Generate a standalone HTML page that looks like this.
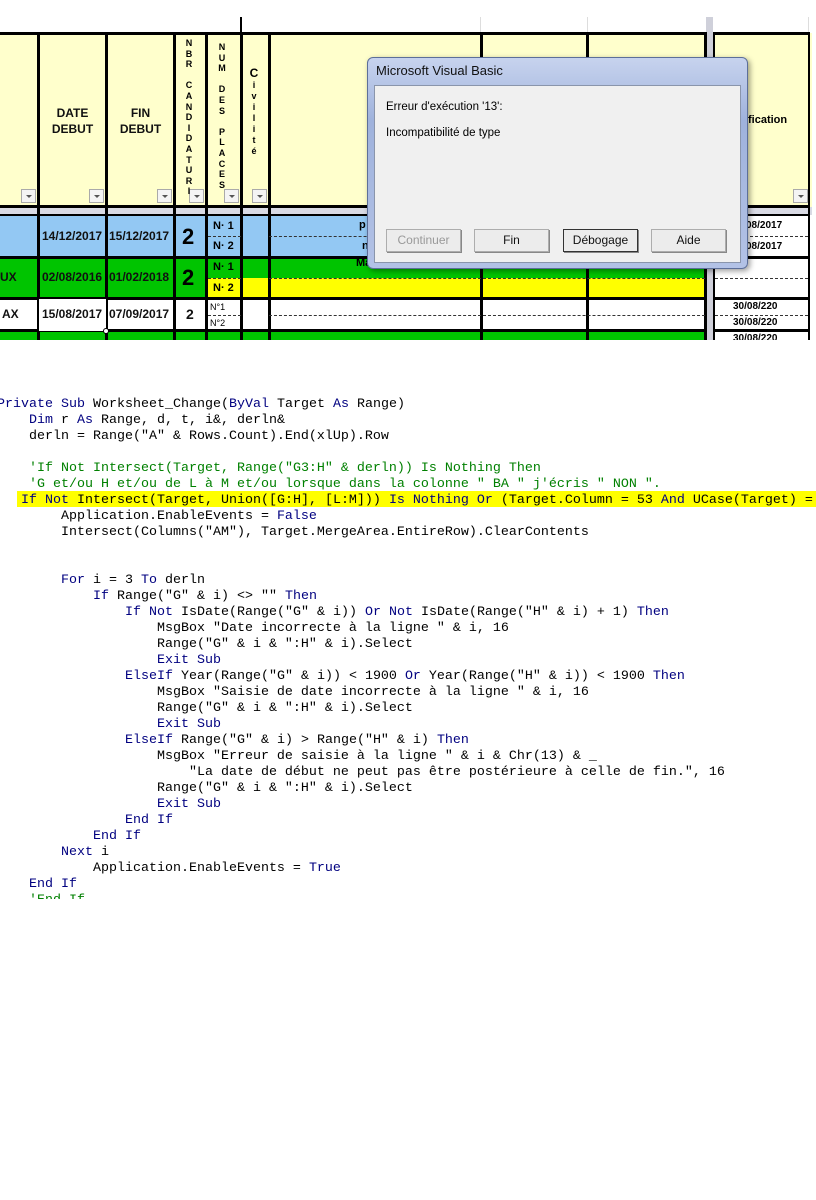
<!DOCTYPE html>
<html><head><meta charset="utf-8">
<style>
*{margin:0;padding:0;box-sizing:border-box}
html,body{width:816px;height:1200px;overflow:hidden}
body{background:#fff;position:relative;font-family:"Liberation Sans",Arial,sans-serif}
.a{position:absolute}
.vl{position:absolute;background:#000;width:3px}
.hl{position:absolute;background:#000;height:3px}
.dash{position:absolute;height:0;border-top:1px dashed #333}
.dd{position:absolute;width:15px;height:14px;background:#f4f4f4;border:1px solid #aaa;top:189px}
.dd:after{content:"";position:absolute;left:4px;top:5px;border-left:3px solid transparent;border-right:3px solid transparent;border-top:3px solid #555}
.b{font-weight:bold;font-size:12px;color:#111}
.vt{position:absolute;font-weight:bold;font-size:9px;line-height:10.6px;text-align:center;width:12px}
#clip{position:absolute;left:0;top:380px;width:816px;height:519px;overflow:hidden}
#code{position:absolute;left:-3px;top:17px;font-family:"Liberation Mono",monospace;font-size:13.33px;line-height:16px;white-space:pre;color:#000}
.k{color:#000080}.c{color:#008000}
.btn{position:absolute;top:229px;width:75px;height:23px;background:#ececec;border:1px solid #adadad;box-shadow:1px 1px 0 #888;font-size:12px;text-align:center;line-height:21px;color:#111}
</style></head><body>
<div class="a" style="left:0;top:33px;width:812px;height:174px;background:#ffffcc"></div>
<div class="a" style="left:0;top:207px;width:812px;height:8px;background:#d9dae4"></div>
<div class="a" style="left:0;top:215px;width:706px;height:42px;background:#93c8f3"></div>
<div class="a" style="left:706px;top:215px;width:106px;height:42px;background:#fff"></div>
<div class="a" style="left:0;top:257px;width:706px;height:41px;background:#00c400"></div>
<div class="a" style="left:208px;top:278px;width:498px;height:20px;background:#ffff00"></div>
<div class="a" style="left:0;top:331px;width:706px;height:9px;background:#00c400"></div>
<div class="a" style="left:706px;top:17px;width:7px;height:323px;background:#cfd0da"></div>
<div class="vl" style="left:240px;top:17px;height:16px;width:2px"></div>
<div class="a" style="left:480px;top:17px;width:1px;height:16px;background:#ddd"></div>
<div class="a" style="left:587px;top:17px;width:1px;height:16px;background:#ddd"></div>
<div class="a" style="left:808px;top:17px;width:1px;height:16px;background:#ddd"></div>
<div class="hl" style="left:0;top:32px;width:706px"></div>
<div class="hl" style="left:713px;top:32px;width:96px"></div>
<div class="hl" style="left:0;top:205px;width:706px"></div>
<div class="hl" style="left:713px;top:205px;width:96px"></div>
<div class="hl" style="left:0;top:214px;width:706px;height:2px"></div>
<div class="hl" style="left:713px;top:214px;width:96px;height:2px"></div>
<div class="hl" style="left:0;top:256px;width:706px"></div>
<div class="hl" style="left:713px;top:256px;width:96px"></div>
<div class="hl" style="left:0;top:297px;width:706px"></div>
<div class="hl" style="left:713px;top:297px;width:96px"></div>
<div class="hl" style="left:0;top:329px;width:706px"></div>
<div class="hl" style="left:713px;top:329px;width:96px"></div>
<div class="vl" style="left:37px;top:32px;height:308px"></div>
<div class="vl" style="left:105px;top:32px;height:308px"></div>
<div class="vl" style="left:173px;top:32px;height:308px"></div>
<div class="vl" style="left:205px;top:32px;height:308px"></div>
<div class="vl" style="left:240px;top:32px;height:308px"></div>
<div class="vl" style="left:268px;top:32px;height:308px"></div>
<div class="vl" style="left:480px;top:32px;height:308px"></div>
<div class="vl" style="left:586px;top:32px;height:308px"></div>
<div class="vl" style="left:704px;top:32px;height:308px"></div>
<div class="vl" style="left:713px;top:32px;height:308px;width:2px"></div>
<div class="vl" style="left:808px;top:32px;height:308px;width:2px"></div>
<div class="dash" style="left:208px;top:236px;width:33px"></div>
<div class="dash" style="left:269px;top:236px;width:436px"></div>
<div class="dash" style="left:715px;top:236px;width:93px"></div>
<div class="dash" style="left:208px;top:278px;width:33px"></div>
<div class="dash" style="left:269px;top:278px;width:436px"></div>
<div class="dash" style="left:715px;top:278px;width:93px"></div>
<div class="dash" style="left:208px;top:315px;width:33px"></div>
<div class="dash" style="left:269px;top:315px;width:436px"></div>
<div class="dash" style="left:715px;top:315px;width:93px"></div>
<div class="dd" style="left:21px"></div><div class="dd" style="left:89px"></div><div class="dd" style="left:157px"></div>
<div class="dd" style="left:189px"></div><div class="dd" style="left:224px"></div><div class="dd" style="left:252px"></div>
<div class="dd" style="left:793px"></div>
<div class="a b" style="left:40px;top:105px;width:65px;text-align:center;line-height:16px">DATE<br>DEBUT</div>
<div class="a b" style="left:108px;top:105px;width:65px;text-align:center;line-height:16px">FIN<br>DEBUT</div>
<div class="vt" style="left:183px;top:38px">N<br>B<br>R<br><br>C<br>A<br>N<br>D<br>I<br>D<br>A<br>T<br>U<br>R<br>I</div>
<div class="vt" style="left:216px;top:42px">N<br>U<br>M<br><br>D<br>E<br>S<br><br>P<br>L<br>A<br>C<br>E<br>S</div>
<div class="vt" style="left:248px;top:68px;font-size:9px;line-height:11px"><span style="font-size:12px">C</span><br>i<br>v<br>i<br>l<br>i<br>t<br>é</div>
<div class="a" style="left:748px;top:114px;font-weight:bold;font-size:11px">fication</div>
<div class="a b" style="left:42px;top:229px">14/12/2017</div>
<div class="a b" style="left:109px;top:229px">15/12/2017</div>
<div class="a" style="left:182px;top:224px;font-weight:bold;font-size:22px">2</div>
<div class="a" style="left:213px;top:220px;font-weight:bold;font-size:11px">N· 1</div>
<div class="a" style="left:213px;top:240px;font-weight:bold;font-size:11px">N· 2</div>
<div class="a b" style="left:0;top:270px">UX</div>
<div class="a b" style="left:42px;top:270px">02/08/2016</div>
<div class="a b" style="left:109px;top:270px">01/02/2018</div>
<div class="a" style="left:182px;top:265px;font-weight:bold;font-size:22px">2</div>
<div class="a" style="left:213px;top:261px;font-weight:bold;font-size:11px">N· 1</div>
<div class="a" style="left:213px;top:282px;font-weight:bold;font-size:11px">N· 2</div>
<div class="a" style="left:356px;top:257px;font-weight:bold;font-size:11px">Ma</div>
<div class="a" style="left:359px;top:219px;font-weight:bold;font-size:11px">p</div>
<div class="a" style="left:362px;top:240px;font-weight:bold;font-size:11px">n</div>
<div class="a b" style="left:2px;top:307px">AX</div>
<div class="a" style="left:38px;top:298px;width:69px;height:34px;border:1px solid #000;background:#fff"></div>
<div class="a" style="left:103px;top:328px;width:6px;height:6px;border:1px solid #000;background:#fff;border-radius:50%"></div>
<div class="a b" style="left:42px;top:307px">15/08/2017</div>
<div class="a b" style="left:109px;top:307px">07/09/2017</div>
<div class="a b" style="left:186px;top:306px;font-size:14px">2</div>
<div class="a" style="left:210px;top:302px;font-size:9px">N°1</div>
<div class="a" style="left:210px;top:318px;font-size:9px">N°2</div>
<div class="a" style="left:746px;top:220px;font-weight:bold;font-size:10px">08/2017</div>
<div class="a" style="left:746px;top:241px;font-weight:bold;font-size:10px">08/2017</div>
<div class="a" style="left:733px;top:301px;font-weight:bold;font-size:10px">30/08/220</div>
<div class="a" style="left:733px;top:317px;font-weight:bold;font-size:10px">30/08/220</div>
<div class="a" style="left:733px;top:333px;font-weight:bold;font-size:10px;height:7px;overflow:hidden">30/08/220</div>
<div class="a" style="left:0;top:340px;width:816px;height:20px;background:#fff"></div>
<div class="a" style="left:367px;top:57px;width:381px;height:212px;border-radius:6px;background:linear-gradient(#c7d3ee,#9fb2dc 30%,#b3c2e6);border:1px solid #5d6f99;box-shadow:2px 2px 6px rgba(0,0,0,.4)"></div>
<div class="a" style="left:376px;top:63px;font-size:13px;color:#111">Microsoft Visual Basic</div>
<div class="a" style="left:374px;top:85px;width:367px;height:178px;background:#f0f0f0;border:1px solid #8a95ab"></div>
<div class="a" style="left:386px;top:101px;font-size:11.5px">Erreur d'exécution '13':</div>
<div class="a" style="left:386px;top:127px;font-size:11.5px">Incompatibilité de type</div>
<div class="btn" style="left:386px;color:#999">Continuer</div>
<div class="btn" style="left:474px">Fin</div>
<div class="btn" style="left:563px;border:1px solid #333">Débogage</div>
<div class="btn" style="left:651px">Aide</div>
<div id="clip">
<div class="a" style="left:17px;top:111px;width:799px;height:16px;background:#ffff00"></div>
<div id="code"><span class="k">Private Sub</span> Worksheet_Change(<span class="k">ByVal</span> Target <span class="k">As</span> Range)
    <span class="k">Dim</span> r <span class="k">As</span> Range, d, t, i&amp;, derln&amp;
    derln = Range("A" &amp; Rows.Count).End(xlUp).Row

    <span class="c">'If Not Intersect(Target, Range("G3:H" &amp; derln)) Is Nothing Then</span>
    <span class="c">'G et/ou H et/ou de L à M et/ou lorsque dans la colonne " BA " j'écris " NON ".</span>
   <span class="k">If Not</span> Intersect(Target, Union([G:H], [L:M])) <span class="k">Is Nothing Or</span> (Target.Column = 53 <span class="k">And</span> UCase(Target) = "NON") <span class="k">Then</span>
        Application.EnableEvents = <span class="k">False</span>
        Intersect(Columns("AM"), Target.MergeArea.EntireRow).ClearContents


        <span class="k">For</span> i = 3 <span class="k">To</span> derln
            <span class="k">If</span> Range("G" &amp; i) &lt;&gt; "" <span class="k">Then</span>
                <span class="k">If Not</span> IsDate(Range("G" &amp; i)) <span class="k">Or Not</span> IsDate(Range("H" &amp; i) + 1) <span class="k">Then</span>
                    MsgBox "Date incorrecte à la ligne " &amp; i, 16
                    Range("G" &amp; i &amp; ":H" &amp; i).Select
                    <span class="k">Exit Sub</span>
                <span class="k">ElseIf</span> Year(Range("G" &amp; i)) &lt; 1900 <span class="k">Or</span> Year(Range("H" &amp; i)) &lt; 1900 <span class="k">Then</span>
                    MsgBox "Saisie de date incorrecte à la ligne " &amp; i, 16
                    Range("G" &amp; i &amp; ":H" &amp; i).Select
                    <span class="k">Exit Sub</span>
                <span class="k">ElseIf</span> Range("G" &amp; i) &gt; Range("H" &amp; i) <span class="k">Then</span>
                    MsgBox "Erreur de saisie à la ligne " &amp; i &amp; Chr(13) &amp; _
                        "La date de début ne peut pas être postérieure à celle de fin.", 16
                    Range("G" &amp; i &amp; ":H" &amp; i).Select
                    <span class="k">Exit Sub</span>
                <span class="k">End If</span>
            <span class="k">End If</span>
        <span class="k">Next</span> i
            Application.EnableEvents = <span class="k">True</span>
    <span class="k">End If</span>
    <span class="c">'End If</span></div>
</div>
</body></html>
